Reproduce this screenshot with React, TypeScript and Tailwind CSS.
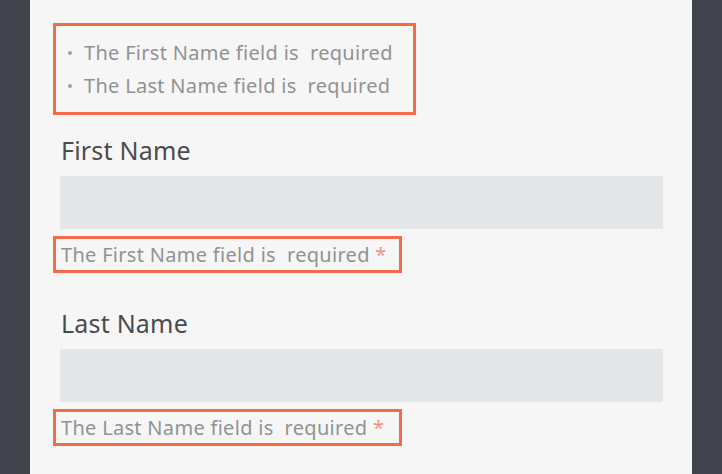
import React from "react";

const errors = [
  "The First Name field is\u00a0 required",
  "The Last Name field is\u00a0 required",
];

const Field = ({ label, error, top }: { label: string; error: string; top: string }) => (
  <div className={top}>
    <div className="ml-[1px] text-[25px] leading-[32px] tracking-[0.2px] text-[#4a4b4d]">{label}</div>
    <div className="mt-[10px] h-[53px] w-full bg-[#e5e6e7]" />
    <div className="ml-[-7px] mt-[7px] w-[349px] whitespace-nowrap border-[3px] border-[#f36b47] pl-[5px] text-[20px] leading-[31px] tracking-[0.3px] text-[#929292]">
      {error} <span className="text-[#f6907a]">*</span>
    </div>
  </div>
);

export default function App() {
  return (
    <div
      className="flex h-[474px] w-[722px] overflow-hidden bg-[#41444d]"
      style={{ fontFamily: '"Noto Sans", "Open Sans", sans-serif' }}
    >
      <div className="ml-[30px] w-[662px] bg-[#f6f6f6] pl-[30px] pr-[29px] pt-[23px]">
        {/* error summary */}
        <div className="ml-[-7px] w-[363px] whitespace-nowrap border-[3px] border-[#f36b47] py-[10px] pl-[11px] text-[20px] leading-[33px] tracking-[0.3px] text-[#929292]">
          {errors.map((e) => (
            <div key={e} className="flex items-center">
              <span className="ml-[1px] mr-[12px] h-[4px] w-[4px] rounded-full bg-[#a0a0a0]" />
              <span>{e}</span>
            </div>
          ))}
        </div>

        <Field label="First Name" error={"The First Name field is\u00a0 required"} top="mt-[19px]" />
        <Field label="Last Name" error={"The Last Name field is\u00a0 required"} top="mt-[34px]" />
      </div>
    </div>
  );
}
